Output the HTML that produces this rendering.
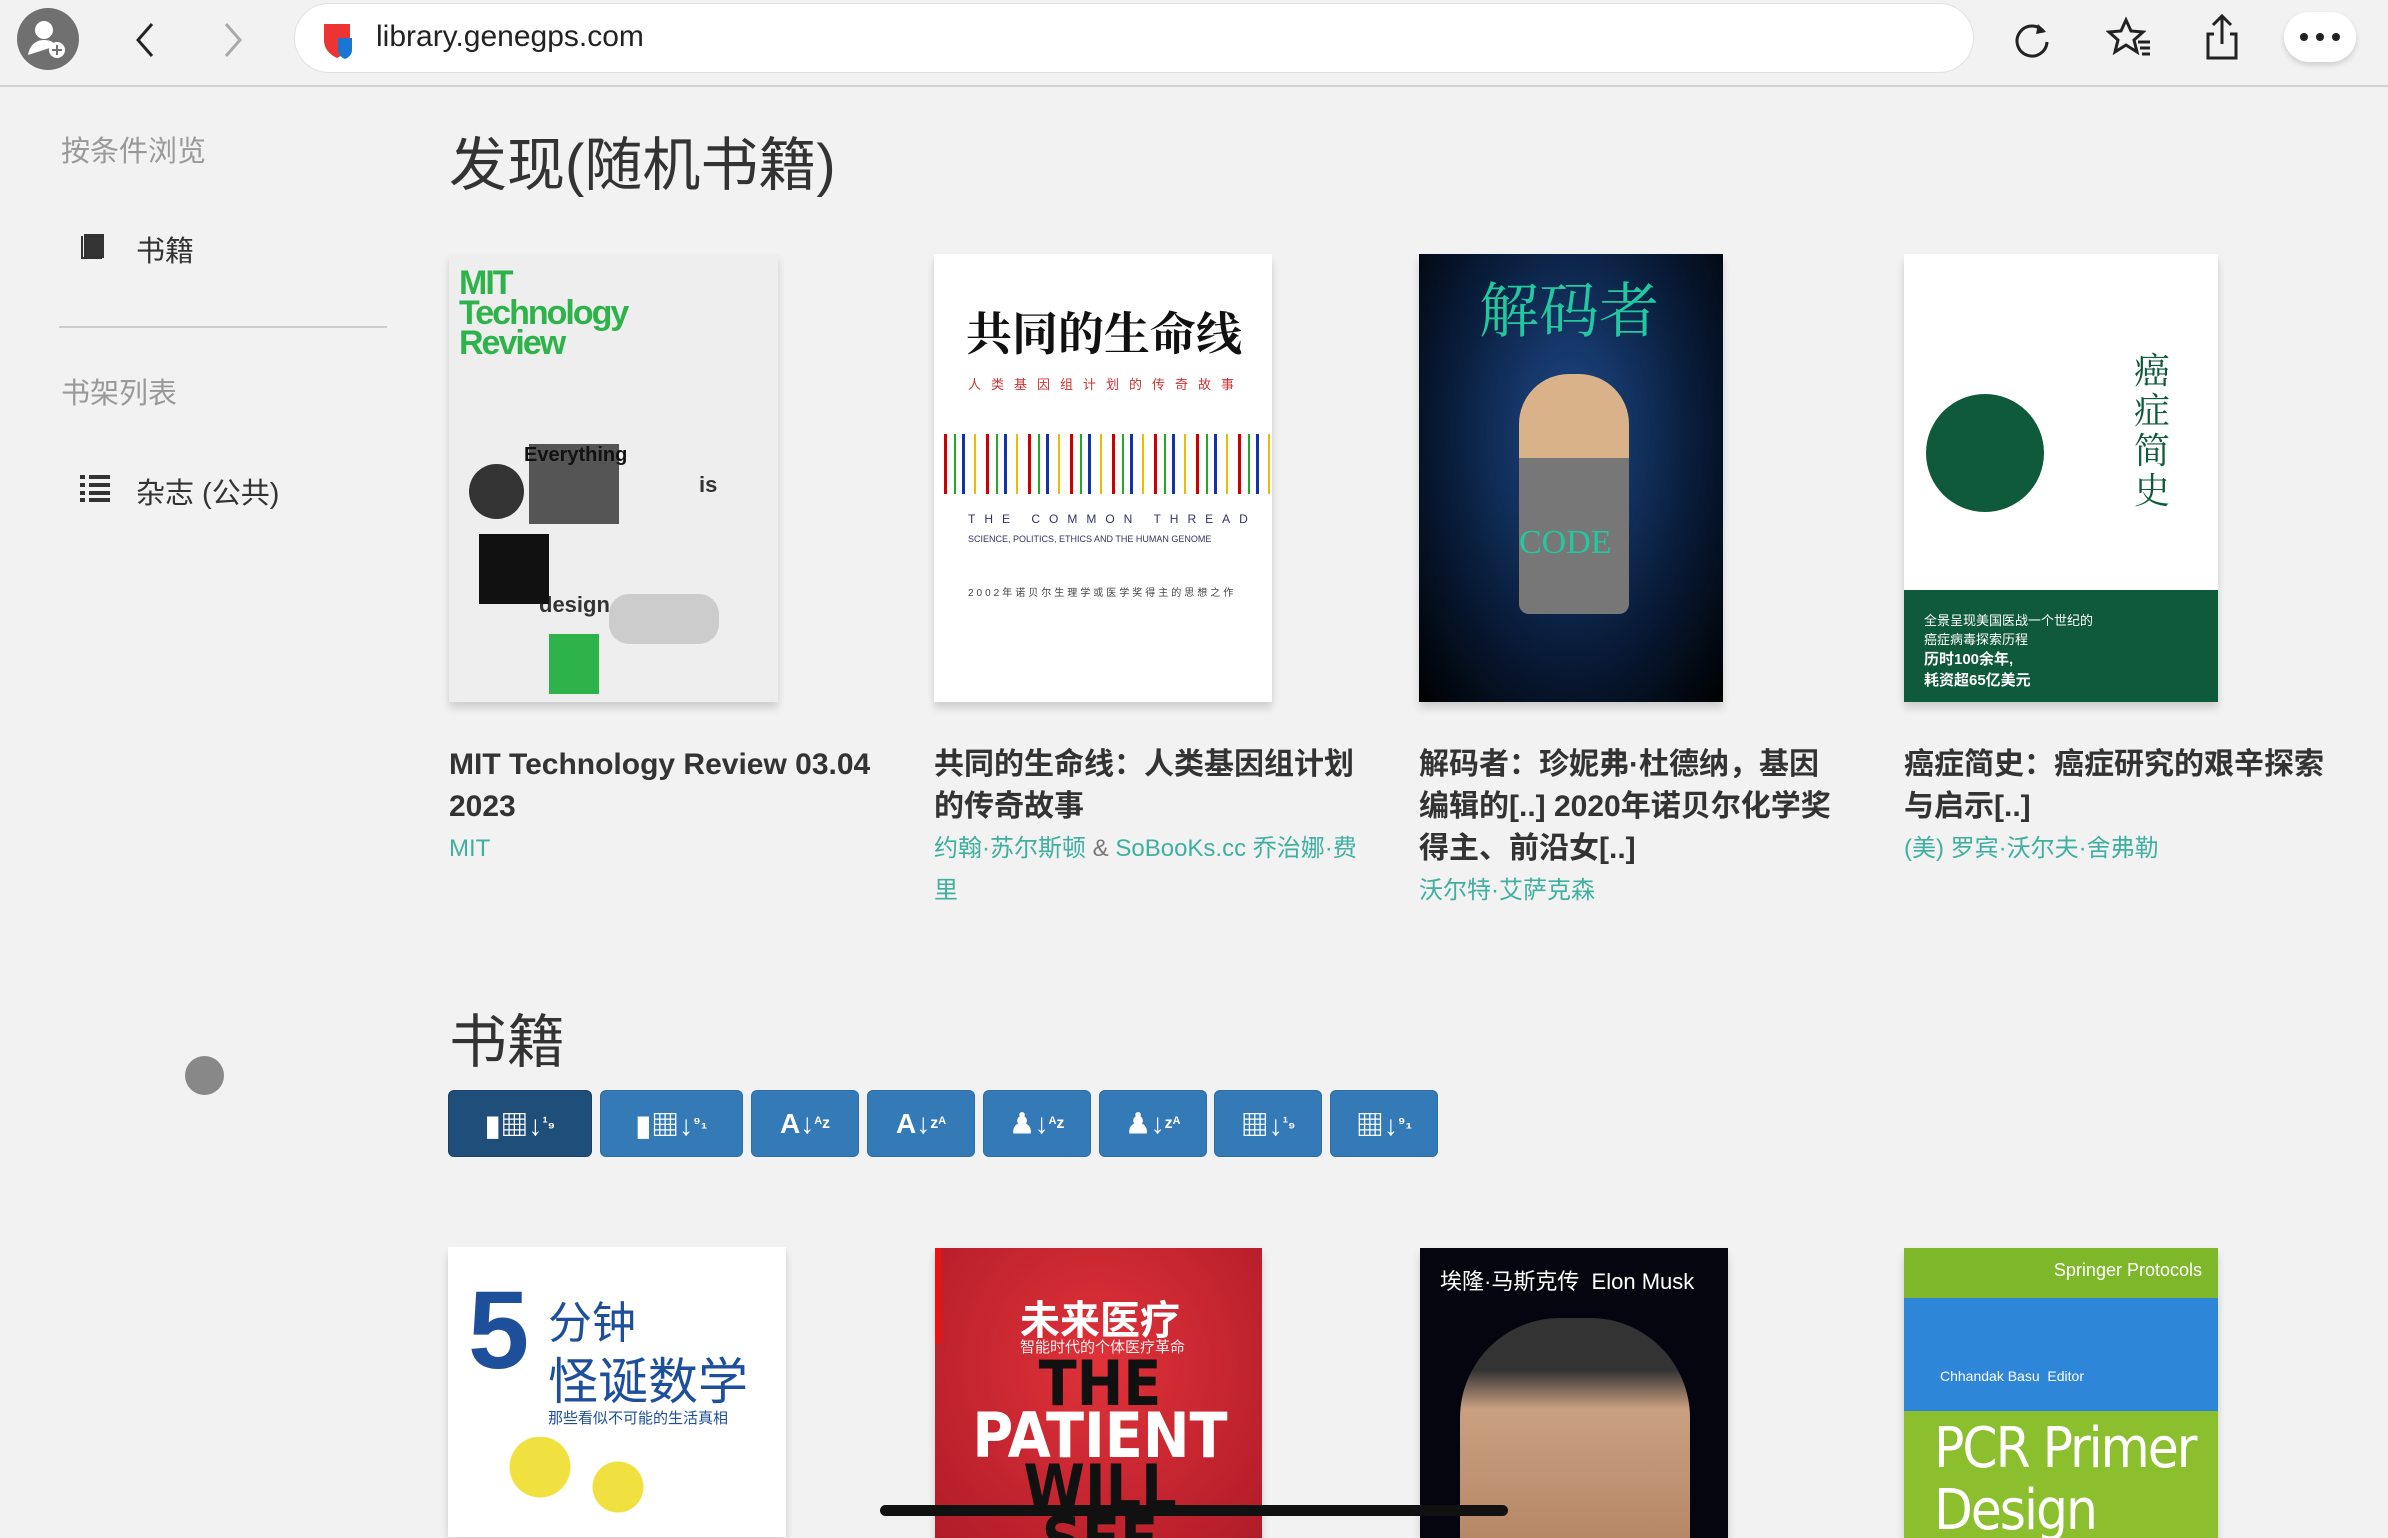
<!DOCTYPE html>
<html><head><meta charset="utf-8"><style>
*{margin:0;padding:0;box-sizing:border-box}
body{width:2388px;height:1532px;overflow:hidden;background:#f2f2f2;font-family:"Liberation Sans","Noto Sans CJK SC",sans-serif;position:relative;color:#333}
.a{position:absolute}
.bar{left:0;top:0;width:2388px;height:87px;background:#f2f2f2;border-bottom:2px solid #d0d0d0}
.url{left:294px;top:3px;width:1680px;height:70px;background:#fff;border-radius:35px;border:1px solid #e2e2e2}
.side{color:#999;font-size:29px}
.nav{color:#333;font-size:29px}
h1{position:absolute;font-weight:normal;font-size:58px;color:#333}
.cov{position:absolute;box-shadow:0 6px 8px rgba(0,0,0,.15);overflow:hidden}
.t{position:absolute;font-size:30px;font-weight:bold;line-height:42px;color:#333;width:432px}
.au{color:#3fb0a0;font-size:24px;font-weight:normal;line-height:42px;display:block}
.btn{position:absolute;top:1090px;height:67px;background:#337ab7;border-radius:6px;border:1px solid #2e6da4;color:#fff;font-size:28px;display:flex;align-items:center;justify-content:center;font-weight:bold}
</style></head><body>
<div class="a bar"></div>
<svg class="a" style="left:16px;top:7px" width="64" height="64"><circle cx="32" cy="32" r="31" fill="#707070"/><circle cx="28" cy="23" r="9" fill="#fff"/><path d="M12 48c2-12 10-15 16-15s10 2 12 6" fill="#fff"/><circle cx="41" cy="43" r="8" fill="#fff"/><path d="M41 38v10M36 43h10" stroke="#707070" stroke-width="2"/></svg>
<svg class="a" style="left:130px;top:20px" width="30" height="40"><path d="M22 4L8 20l14 16" fill="none" stroke="#222" stroke-width="3"/></svg>
<svg class="a" style="left:218px;top:20px" width="30" height="40"><path d="M8 4l14 16L8 36" fill="none" stroke="#aaa" stroke-width="3"/></svg>
<div class="a url"></div>
<svg class="a" style="left:320px;top:20px" width="36" height="40"><path d="M4 4h26v16c0 10-7 15-13 18C11 35 4 30 4 20z" fill="#e33"/><path d="M18 18h14v12c0 5-4 8-7 9-3-1-7-4-7-9z" fill="#1976d2"/></svg>
<div class="a" style="left:376px;top:20px;font-size:30px;color:#222">library.genegps.com</div>
<svg class="a" style="left:2010px;top:18px" width="44" height="44"><path d="M34 14A15 15 0 1 0 37 24" fill="none" stroke="#222" stroke-width="3"/><path d="M28 6l8 8-10 2z" fill="#222"/></svg>
<svg class="a" style="left:2106px;top:16px" width="46" height="44"><path d="M20 4l5 11 12 1-9 8 3 12-11-7-11 7 3-12-9-8 12-1z" fill="none" stroke="#222" stroke-width="3"/><path d="M32 26h12M34 32h10M36 38h8" stroke="#222" stroke-width="3"/></svg>
<svg class="a" style="left:2202px;top:12px" width="40" height="50"><path d="M20 4v28M11 13l9-9 9 9M12 22H6v24h28V22h-6" fill="none" stroke="#222" stroke-width="3"/></svg>
<div class="a" style="left:2284px;top:12px;width:72px;height:50px;background:#fff;border-radius:25px;box-shadow:0 3px 6px rgba(0,0,0,.15)"></div>
<svg class="a" style="left:2298px;top:30px" width="44" height="14"><circle cx="6" cy="7" r="4" fill="#222"/><circle cx="22" cy="7" r="4" fill="#222"/><circle cx="38" cy="7" r="4" fill="#222"/></svg>

<div class="a side" style="left:61px;top:128px">按条件浏览</div>
<svg class="a" style="left:80px;top:230px" width="28" height="30"><path d="M4 4h20v24H4z" fill="#333"/><path d="M2 6v22h20" fill="none" stroke="#333" stroke-width="2"/></svg>
<div class="a nav" style="left:136px;top:228px">书籍</div>
<div class="a" style="left:59px;top:326px;width:328px;height:2px;background:#ccc"></div>
<div class="a side" style="left:61px;top:370px">书架列表</div>
<svg class="a" style="left:80px;top:474px" width="30" height="28"><path d="M0 3h5M9 3h21M0 11h5M9 11h21M0 19h5M9 19h21M0 26h5M9 26h21" stroke="#333" stroke-width="4"/></svg>
<div class="a nav" style="left:136px;top:470px">杂志 (公共)</div>
<div class="a" style="left:185px;top:1056px;width:39px;height:39px;border-radius:50%;background:#888"></div>

<h1 style="left:449px;top:118px">发现(随机书籍)</h1>

<div class="cov" style="left:449px;top:254px;width:329px;height:448px;background:#eee">
<div class="a" style="left:10px;top:14px;color:#2db34a;font-weight:bold;font-size:34px;line-height:30px;letter-spacing:-2px">MIT<br>Technology<br>Review</div>
<div class="a" style="left:80px;top:190px;width:90px;height:80px;background:#555"></div>
<div class="a" style="left:75px;top:190px;font-size:20px;font-weight:bold;color:#111;top:190px">Everything</div>
<div class="a" style="left:250px;top:218px;font-size:22px;font-weight:bold">is</div>
<div class="a" style="left:90px;top:338px;font-size:22px;font-weight:bold">design</div>
<div class="a" style="left:20px;top:210px;width:55px;height:55px;border-radius:50%;background:#333"></div>
<div class="a" style="left:160px;top:340px;width:110px;height:50px;background:#ccc;border-radius:20px"></div>
<div class="a" style="left:30px;top:280px;width:70px;height:70px;background:#111"></div>
<div class="a" style="left:100px;top:380px;width:50px;height:60px;background:#2db34a"></div>
</div>
<div class="cov" style="left:934px;top:254px;width:338px;height:448px;background:#fff">
<div class="a" style="left:32px;top:44px;font-size:46px;font-family:'Noto Serif CJK SC',serif;font-weight:bold;color:#111">共同的生命线</div>
<div class="a" style="left:34px;top:120px;font-size:13px;color:#c33;letter-spacing:10px">人类基因组计划的传奇故事</div>
<div class="a" style="left:0;top:180px;width:338px;height:60px;background:repeating-linear-gradient(90deg,#fff 0 10px,#c00 10px 13px,#fff 13px 20px,#2a2 20px 22px,#fff 22px 28px,#13a 28px 31px,#fff 31px 40px,#eb0 40px 42px)"></div>
<div class="a" style="left:34px;top:258px;font-size:12px;color:#336;letter-spacing:9px">THE COMMON THREAD</div>
<div class="a" style="left:34px;top:280px;font-size:9px;color:#336">SCIENCE, POLITICS, ETHICS AND THE HUMAN GENOME</div>
<div class="a" style="left:34px;top:330px;font-size:10px;color:#444;letter-spacing:3px">2002年诺贝尔生理学或医学奖得主的思想之作</div>
</div>
<div class="cov" style="left:1419px;top:254px;width:304px;height:448px;background:radial-gradient(ellipse at 50% 40%,#1e4a8a,#081a36 60%,#000)">
<div class="a" style="left:60px;top:10px;font-size:60px;color:#22c8a0;font-family:'Noto Serif CJK SC',serif">解码者</div>
<div class="a" style="left:100px;top:120px;width:110px;height:240px;border-radius:50px 50px 10px 10px;background:linear-gradient(#d9b28a 0 35%,#777 35%)"></div>
<div class="a" style="left:100px;top:270px;font-size:34px;color:#22c8a0;font-family:'Liberation Serif',serif">CODE</div>
</div>
<div class="cov" style="left:1904px;top:254px;width:314px;height:448px;background:#fff">
<div class="a" style="left:22px;top:140px;width:118px;height:118px;border-radius:50%;background:#0e5a3a"></div>
<div class="a" style="left:230px;top:95px;font-size:36px;line-height:40px;width:40px;color:#0e5a3a;font-family:'Noto Serif CJK SC',serif">癌症简史</div>
<div class="a" style="left:0;top:336px;width:314px;height:112px;background:#0e5a3a;color:#fff;font-size:13px;padding:20px">全景呈现美国医战一个世纪的<br>癌症病毒探索历程<br><b style="font-size:15px">历时100余年,<br>耗资超65亿美元</b></div>
</div>

<div class="t" style="left:449px;top:744px">MIT Technology Review 03.04 2023<span class="au">MIT</span></div>
<div class="t" style="left:934px;top:744px">共同的生命线：人类基因组计划的传奇故事<span class="au">约翰·苏尔斯顿 <span style="color:#777">&amp;</span> SoBooKs.cc 乔治娜·费里</span></div>
<div class="t" style="left:1419px;top:744px;width:412px">解码者：珍妮弗·杜德纳，基因编辑的[..] 2020年诺贝尔化学奖得主、前沿女[..]<span class="au">沃尔特·艾萨克森</span></div>
<div class="t" style="left:1904px;top:744px">癌症简史：癌症研究的艰辛探索与启示[..]<span class="au">(美) 罗宾·沃尔夫·舍弗勒</span></div>

<h1 style="left:449px;top:995px">书籍</h1>
<div class="btn" style="left:448px;width:144px;background:#1f4e7a;border-color:#1a4066">▮▦↓<small style="font-size:16px">¹₉</small></div>
<div class="btn" style="left:600px;width:143px">▮▦↓<small style="font-size:16px">⁹₁</small></div>
<div class="btn" style="left:751px;width:108px">A↓<small style="font-size:16px">ᴬz</small></div>
<div class="btn" style="left:867px;width:108px">A↓<small style="font-size:16px">zᴬ</small></div>
<div class="btn" style="left:983px;width:108px">♟↓<small style="font-size:16px">ᴬz</small></div>
<div class="btn" style="left:1099px;width:108px">♟↓<small style="font-size:16px">zᴬ</small></div>
<div class="btn" style="left:1214px;width:108px">▦↓<small style="font-size:16px">¹₉</small></div>
<div class="btn" style="left:1330px;width:108px">▦↓<small style="font-size:16px">⁹₁</small></div>

<div class="cov" style="left:448px;top:1247px;width:338px;height:290px;background:#fff">
<div class="a" style="left:20px;top:20px;font-size:110px;color:#1d4f9a;font-weight:bold">5</div>
<div class="a" style="left:100px;top:40px;font-size:44px;color:#1d4f9a">分钟</div>
<div class="a" style="left:100px;top:95px;font-size:50px;color:#1d4f9a">怪诞数学</div>
<div class="a" style="left:100px;top:160px;font-size:15px;color:#1d4f9a">那些看似不可能的生活真相</div>
<div class="a" style="left:40px;top:190px;width:260px;height:100px;background:radial-gradient(circle at 20% 30%,#f0e040 0 30px,transparent 31px),radial-gradient(circle at 50% 50%,#f0e040 0 25px,transparent 26px)"></div>
</div>
<div class="cov" style="left:935px;top:1248px;width:327px;height:290px;background:radial-gradient(ellipse at 50% 40%,#e0323a,#b01c28)">
<div class="a" style="left:0;top:0;width:6px;height:95px;background:#e11"></div>
<div class="a" style="left:85px;top:40px;font-size:40px;color:#fff;font-weight:bold">未来医疗</div>
<div class="a" style="left:85px;top:88px;font-size:15px;color:#eee">智能时代的个体医疗革命</div>
<div class="a" style="left:30px;top:110px;font-size:62px;line-height:52px;font-weight:bold;color:#fff;text-align:center;width:270px;font-family:'DejaVu Sans Condensed',sans-serif"><span style="color:#111">THE</span><br>PATIENT<br><span style="color:#111">WILL SEE</span></div>
</div>
<div class="cov" style="left:1420px;top:1248px;width:308px;height:290px;background:#050510">
<div class="a" style="left:20px;top:16px;font-size:22px;color:#fff">埃隆·马斯克传 &nbsp;Elon Musk</div>
<div class="a" style="left:40px;top:70px;width:230px;height:260px;border-radius:100px 100px 0 0;background:linear-gradient(#333 0 20%,#c9a080 35%,#b08060)"></div>
</div>
<div class="cov" style="left:1904px;top:1248px;width:314px;height:290px;background:#8bbf2e">
<div class="a" style="left:0;top:0;width:314px;height:50px;background:#7eb82a;color:#fff;font-size:18px;text-align:right;padding:12px 16px 0 0">Springer Protocols</div>
<div class="a" style="left:0;top:50px;width:314px;height:113px;background:#2e86d8"></div>
<div class="a" style="left:36px;top:120px;font-size:14px;color:#fff">Chhandak Basu &nbsp;Editor</div>
<div class="a" style="left:30px;top:170px;font-size:56px;color:#fff;line-height:62px;font-family:'DejaVu Sans Condensed',sans-serif;letter-spacing:-2px">PCR Primer<br>Design</div>
</div>
<div class="a" style="left:880px;top:1505px;width:628px;height:11px;border-radius:6px;background:#111"></div>
</body></html>
